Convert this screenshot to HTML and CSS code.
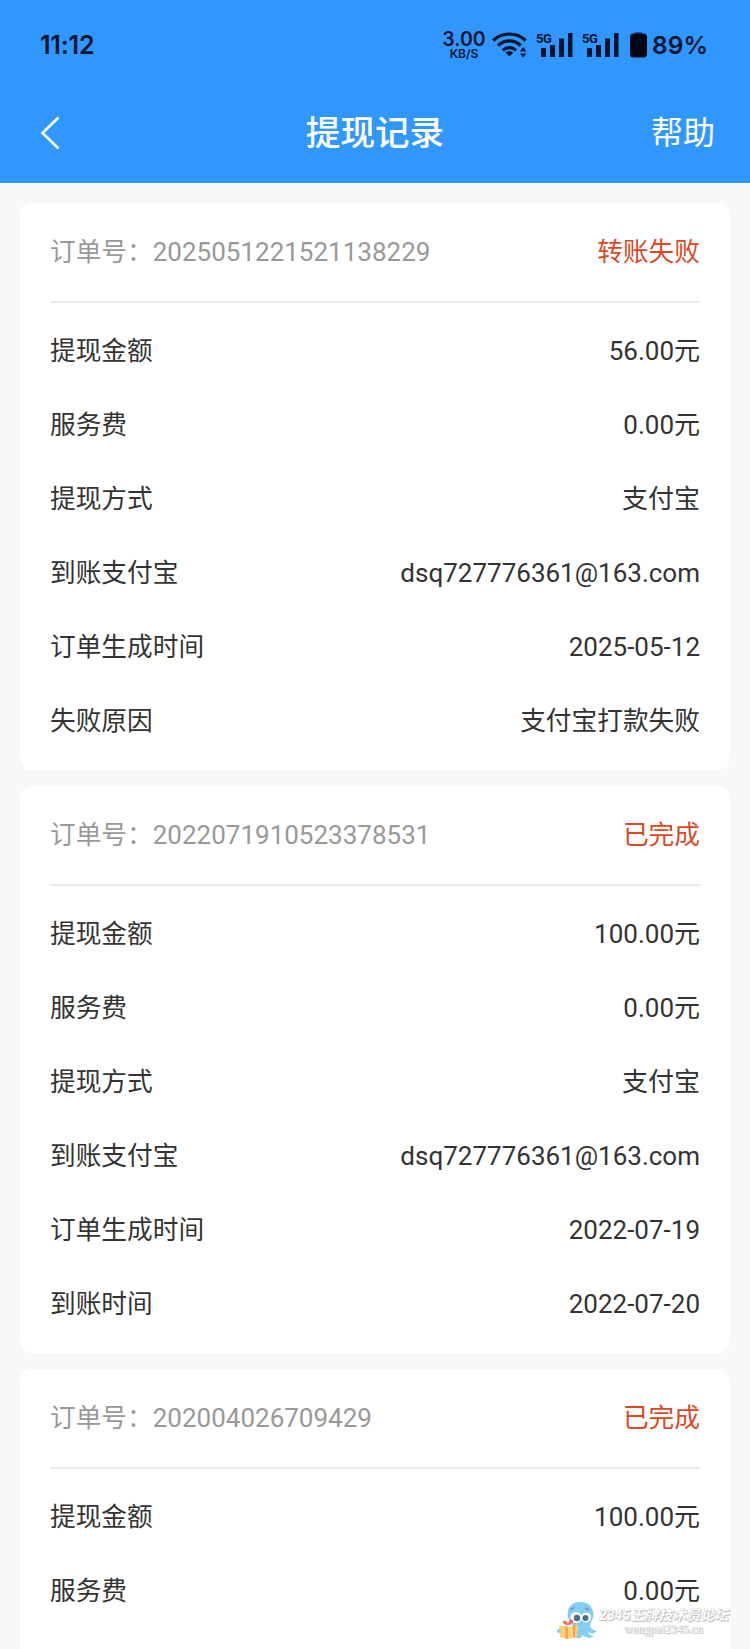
FILE: index.html
```html
<!DOCTYPE html>
<html lang="zh-CN">
<head>
  <meta charset="UTF-8" />
  <meta name="viewport" content="width=device-width, initial-scale=1.0"/>
  <title>提现记录</title>
  <link rel="stylesheet" href="styles.css">
</head>
<body>
  <header class="header">
    <div class="status-bar">
      <span class="time">11:12</span>
      <div class="status-icons">
        <div class="speed"><b>3.00</b><span>KB/S</span></div>
        <svg class="wifi" width="36" height="28" viewBox="0 0 36 28">
          <g fill="none" stroke="#03142f" stroke-width="3.2">
            <path d="M1.2 9.500C10 .8 24.800 .8 33.600 9.500"/>
            <path d="M6 14.500C12.500 8.200 22.300 8.200 28.800 14.500"/>
            <path d="M10.800 19.300C14.600 15.700 20.200 15.700 24 19.300"/>
          </g>
          <path d="M13.500 21.500Q17.400 18.500 21.300 21.500L17.400 25.500Z" fill="#03142f"/>
          <path d="M28 20.500l3.200-4.500 3.200 4.500zM28 22.500l3.200 4 3.200-4z" fill="#03142f"/>
        </svg>
        <div class="signal">
          <span>5G</span>
          <svg width="32" height="26" viewBox="0 0 32 26"><path d="M0 16h5v9H0zM9 13h5v12H9zM18 6.500h5V25h-5zM27 1h4.500v24H27z" fill="#03142f"/></svg>
        </div>
        <div class="signal">
          <span>5G</span>
          <svg width="32" height="26" viewBox="0 0 32 26"><path d="M0 16h5v9H0zM9 13h5v12H9zM18 6.500h5V25h-5zM27 1h4.500v24H27z" fill="#03142f"/></svg>
        </div>
        <svg class="battery" width="17" height="26" viewBox="0 0 17 26"><rect x="4.500" width="8" height="4" rx="1.500" fill="#174f90"/><rect y="1.500" width="17" height="24" rx="3.500" fill="#000814"/></svg>
        <span class="percent">89%</span>
      </div>
    </div>
    <nav class="nav-bar">
      <a class="back" href="#">
        <svg width="20" height="34" viewBox="0 0 20 34"><path d="M18.500 1.500L2.500 17l16 15.500" fill="none" stroke="#fff" stroke-width="2.600"/></svg>
      </a>
      <h1>提现记录</h1>
      <a class="help" href="#">帮助</a>
    </nav>
  </header>

  <main class="list">
    <section class="card">
      <div class="card-head"><span class="order"><span class="label">订单号：</span>2025051221521138229</span><span class="state">转账失败</span></div>
      <div class="row"><span class="label">提现金额</span><span>56.00元</span></div>
      <div class="row"><span class="label">服务费</span><span>0.00元</span></div>
      <div class="row"><span class="label">提现方式</span><span>支付宝</span></div>
      <div class="row"><span class="label">到账支付宝</span><span>dsq727776361@163.com</span></div>
      <div class="row"><span class="label">订单生成时间</span><span>2025-05-12</span></div>
      <div class="row"><span class="label">失败原因</span><span class="label">支付宝打款失败</span></div>
    </section>

    <section class="card">
      <div class="card-head"><span class="order"><span class="label">订单号：</span>2022071910523378531</span><span class="state">已完成</span></div>
      <div class="row"><span class="label">提现金额</span><span>100.00元</span></div>
      <div class="row"><span class="label">服务费</span><span>0.00元</span></div>
      <div class="row"><span class="label">提现方式</span><span>支付宝</span></div>
      <div class="row"><span class="label">到账支付宝</span><span>dsq727776361@163.com</span></div>
      <div class="row"><span class="label">订单生成时间</span><span>2022-07-19</span></div>
      <div class="row"><span class="label">到账时间</span><span>2022-07-20</span></div>
    </section>

    <section class="card">
      <div class="card-head"><span class="order"><span class="label">订单号：</span>202004026709429</span><span class="state">已完成</span></div>
      <div class="row"><span class="label">提现金额</span><span>100.00元</span></div>
      <div class="row"><span class="label">服务费</span><span>0.00元</span></div>
    </section>
  </main>

  <div class="watermark">
    <svg width="42" height="40" viewBox="0 0 42 40">
      <path d="M15 24C8 17 9 3 22 2c13-1 18 12 12 20-2 4 0 8 6 9-3 3-6 3-9 1 1 3 4 4 6 4-4 3-9 2-11-1-2 4-7 4-9 1z" fill="#86cdf3"/>
      <circle cx="19" cy="17.500" r="5.500" fill="#fff"/><circle cx="29" cy="17.500" r="5" fill="#fff"/>
      <circle cx="20" cy="18" r="3.200" fill="#4e6f8c"/><circle cx="28.500" cy="18" r="3" fill="#4e6f8c"/>
      <path d="M13.500 9.500l4-2M28 8l4 2" stroke="#4e8fb5" stroke-width="1.200"/>
      <path d="M2 25l8 2 11-2-1 12-9 2-8-2z" fill="#fbd373"/>
      <path d="M8 26l3 .8V39l-2.500-.5zM16 25.500l2.500-.5-.5 12.500-2 .5z" fill="#f5a25c"/>
      <path d="M10 25q-5-1-4-4 4-1 5 3 1-6 5-4 1 3-3 5z" fill="#e9716a"/>
      <circle cx="2" cy="31" r="2" fill="#86cdf3"/>
    </svg>
    <div class="watermark-text"><b>2345王牌技术员论坛</b><span>wangpai2345.cn</span></div>
  </div>
</body>
</html>
```

FILE: styles.css
```css
* {
  box-sizing: border-box;
}
body {
  margin: 0;
  height: 1649px;
  position: relative;
  background: #f8f8f8;
  color: #333;
  font-family: Roboto, "Noto Sans CJK SC", sans-serif;
  font-size: 26px;
}
a {
  color: #fff;
  text-decoration: none;
}
.header {
  height: 183px;
  background: #3097fe;
  color: #fff;
}
.status-bar {
  display: flex;
  justify-content: space-between;
  align-items: center;
  height: 90px;
  padding: 0 42px 0 40px;
  color: #03142f;
  font-family: Inter, sans-serif;
  font-weight: 600;
}
.time {
  font-size: 25px;
  letter-spacing: -0.2px;
}
.status-icons {
  display: flex;
  align-items: center;
}
.speed {
  display: flex;
  flex-direction: column;
  align-items: center;
  width: 42px;
  margin-right: 7px;
}
.speed b {
  font-size: 19.5px;
  line-height: 17px;
  font-weight: 600;
}
.speed span {
  font-size: 12px;
  line-height: 12px;
}
.wifi {
  margin-right: 13px;
}
.signal {
  position: relative;
  width: 32px;
  height: 26px;
  margin-right: 14px;
}
.signal + .signal {
  margin-right: 11px;
}
.signal span {
  position: absolute;
  left: -5px;
  top: 0;
  font-family: Roboto, sans-serif;
  font-size: 13px;
  line-height: 13px;
  font-weight: 700;
  letter-spacing: -0.5px;
}
.signal svg {
  display: block;
}
.battery {
  margin-right: 5px;
}
.percent {
  font-size: 24.5px;
}
.nav-bar {
  display: grid;
  grid-template-columns: 1fr auto 1fr;
  align-items: center;
  height: 86px;
  padding: 0 35px;
}
.back {
  display: flex;
  padding-left: 5px;
}
.nav-bar h1 {
  margin: 0;
  font-size: 34.6px;
  line-height: 84px;
  font-weight: 500;
}
.help {
  justify-self: end;
  font-size: 32px;
  line-height: 84px;
}
.list {
  display: flex;
  flex-direction: column;
  gap: 16px;
  height: 1466px;
  padding: 20px 20px 0;
}
.card {
  height: 567px;
  flex-shrink: 0;
  padding: 0 30px;
  background: #fff;
  border-radius: 12px;
}
.card:last-child {
  flex: 1;
  border-radius: 12px 12px 0 0;
}
.card-head {
  display: flex;
  justify-content: space-between;
  height: 100px;
  margin-bottom: 11px;
  border-bottom: 2px solid #ebebeb;
  line-height: 98px;
}
.order {
  color: #999;
}
.state {
  color: #db4822;
  font-size: 25.7px;
}
.row {
  display: flex;
  justify-content: space-between;
  height: 74px;
  line-height: 74px;
}
.label {
  font-size: 25.7px;
}
.watermark {
  position: absolute;
  left: 557px;
  top: 1600px;
  display: flex;
}
.watermark-text {
  display: flex;
  flex-direction: column;
  align-items: center;
  padding-top: 7px;
  color: #fff;
  text-shadow: 0 0 1px #999, 1px 1px 1px #bbb;
}
.watermark-text b {
  font-size: 14px;
  line-height: 16px;
  font-style: italic;
  white-space: nowrap;
}
.watermark-text span {
  font-family: "Liberation Serif", serif;
  font-size: 12px;
  line-height: 12px;
}
```
